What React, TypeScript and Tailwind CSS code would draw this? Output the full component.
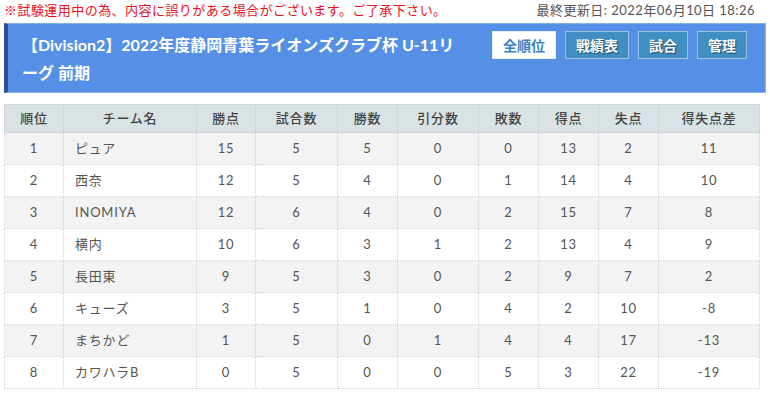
const columns = [
  { label: '順位', w: 'w-[59px]' },
  { label: 'チーム名', w: 'w-[133px]' },
  { label: '勝点', w: 'w-[59px]' },
  { label: '試合数', w: 'w-[82px]' },
  { label: '勝数', w: 'w-[60px]' },
  { label: '引分数', w: 'w-[81px]' },
  { label: '敗数', w: 'w-[60px]' },
  { label: '得点', w: 'w-[60px]' },
  { label: '失点', w: 'w-[60px]' },
  { label: '得失点差', w: 'w-[101px]' },
];

const rows: (string | number)[][] = [
  [1, 'ピュア', 15, 5, 5, 0, 0, 13, 2, 11],
  [2, '西奈', 12, 5, 4, 0, 1, 14, 4, 10],
  [3, 'INOMIYA', 12, 6, 4, 0, 2, 15, 7, 8],
  [4, '横内', 10, 6, 3, 1, 2, 13, 4, 9],
  [5, '長田東', 9, 5, 3, 0, 2, 9, 7, 2],
  [6, 'キューズ', 3, 5, 1, 0, 4, 2, 10, -8],
  [7, 'まちかど', 1, 5, 0, 1, 4, 4, 17, -13],
  [8, 'カワハラB', 0, 5, 0, 0, 5, 3, 22, -19],
];

const font = "font-['Lato','Noto_Sans_CJK_JP',sans-serif]";

function NavButton({ label, active }: { label: string; active?: boolean }) {
  if (active) {
    return (
      <button className="h-[28px] border border-[#e6eefb] bg-white px-[10px] text-[14px] font-bold text-[#3a7fc4]">
        {label}
      </button>
    );
  }
  return (
    <button className="h-[28px] border border-[#9cc3e0] bg-[#3f8fc2] px-[10px] text-[14px] font-bold text-white [text-shadow:1px_1px_1px_rgba(0,0,0,0.55)]">
      {label}
    </button>
  );
}

export default function App() {
  return (
    <div className={`${font} w-[770px] h-[396px] overflow-hidden bg-white px-[4px] text-[#555]`}>
      {/* notice line */}
      <div className="flex h-[23px] items-start justify-between pt-[1px] pr-[11px] text-[13px] leading-[18px] tracking-[0.45px]">
        <span className="text-[#e8101a]">※試験運用中の為、内容に誤りがある場合がございます。ご了承下さい。</span>
        <span className="text-[#555]">最終更新日: 2022年06月10日 18:26</span>
      </div>

      {/* title bar */}
      <div className="flex h-[70px] items-start gap-[26px] border-t border-r border-b border-[#7fb0ee] border-l-[4px] border-l-[#2c4f9a] bg-[#558fe6] pt-[7px] pl-[14px] pr-[18px]">
        <h1 className="flex-1 text-[16px] font-bold leading-[28px] text-white">
          【Division2】2022年度静岡青葉ライオンズクラブ杯 U-11リーグ 前期
        </h1>
        <div className="flex shrink-0 gap-[9px]">
          <NavButton label="全順位" active />
          <NavButton label="戦績表" />
          <NavButton label="試合" />
          <NavButton label="管理" />
        </div>
      </div>

      {/* standings */}
      <table className="mt-[11px] w-[755px] table-fixed border-collapse text-[13px] tracking-[0.8px]">
        <thead>
          <tr className="h-[28px] bg-[#d9e3e5]">
            {columns.map((c) => (
              <th
                key={c.label}
                className={`${c.w} border border-[#d0d6d8] text-center font-medium text-[#444]`}
              >
                {c.label}
              </th>
            ))}
          </tr>
        </thead>
        <tbody>
          {rows.map((r, i) => (
            <tr key={i} className={`h-[32px] ${i % 2 === 0 ? 'bg-[#f3f3f3]' : 'bg-white'}`}>
              {r.map((v, j) => (
                <td
                  key={j}
                  className={`border border-dotted border-[#d4d4d4] ${j === 1 ? 'pl-[11px] text-left' : 'text-center'}`}
                >
                  {v}
                </td>
              ))}
            </tr>
          ))}
        </tbody>
      </table>
    </div>
  );
}
